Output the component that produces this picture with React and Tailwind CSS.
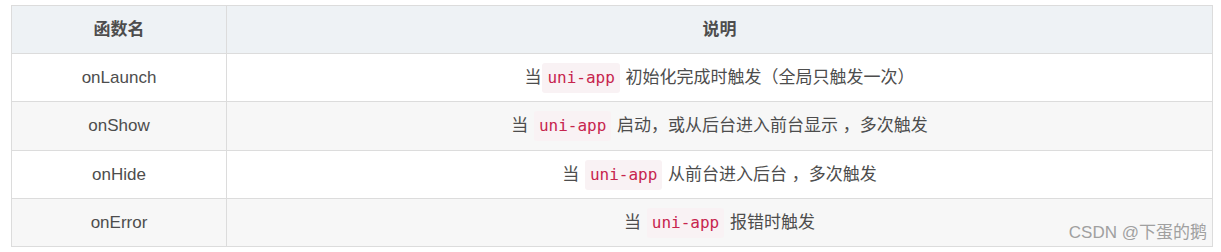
import React from 'react';

const Code = ({ children }) => (
    <code className="mx-[1px] rounded-[3px] bg-[#f9f2f4] px-[5px] py-[3px] font-['DejaVu_Sans_Mono','Liberation_Mono',monospace] text-[16px] text-[#c7254e]">
        {children}
    </code>
);

const rows = [
    { name: 'onLaunch', h: 'h-[48px]', bg: 'bg-white', desc: <>当<Code>uni-app</Code> 初始化完成时触发（全局只触发一次）</> },
    { name: 'onShow', h: 'h-[49px]', bg: 'bg-[#f7f7f7]', desc: <>当 <Code>uni-app</Code> 启动，或从后台进入前台显示 ，多次触发</> },
    { name: 'onHide', h: 'h-[48px]', bg: 'bg-white', desc: <>当 <Code>uni-app</Code> 从前台进入后台 ，多次触发</> },
    { name: 'onError', h: 'h-[48px]', bg: 'bg-[#f7f7f7]', desc: <>当 <Code>uni-app</Code> 报错时触发</> },
];

const App = () => {
    return (
        <div className="relative h-[252px] w-[1221px] bg-white pl-[11px] pt-[5px] font-['Liberation_Sans','Noto_Sans_CJK_SC',sans-serif] text-[17px] text-[#4d4d4d]">
            <div className="w-[1202px] border border-[#dcdcdc]">
                {/* header */}
                <div className="grid h-[47px] grid-cols-[215px_1fr] bg-[#eef2f5] font-bold">
                    <div className="flex items-center justify-center border-r border-[#dcdcdc]">函数名</div>
                    <div className="flex items-center justify-center">说明</div>
                </div>

                {rows.map((row) => (
                    <div key={row.name} className={`grid grid-cols-[215px_1fr] border-t border-[#dcdcdc] ${row.h} ${row.bg}`}>
                        <div className="flex items-center justify-center border-r border-[#dcdcdc]">{row.name}</div>
                        <div className="flex items-center justify-center whitespace-pre">{row.desc}</div>
                    </div>
                ))}
            </div>

            {/* watermark */}
            <div className="absolute bottom-[7px] right-[14px] text-[17px] text-[#a0a0a0]">CSDN @下蛋的鹅</div>
        </div>
    );
};

export default App;
